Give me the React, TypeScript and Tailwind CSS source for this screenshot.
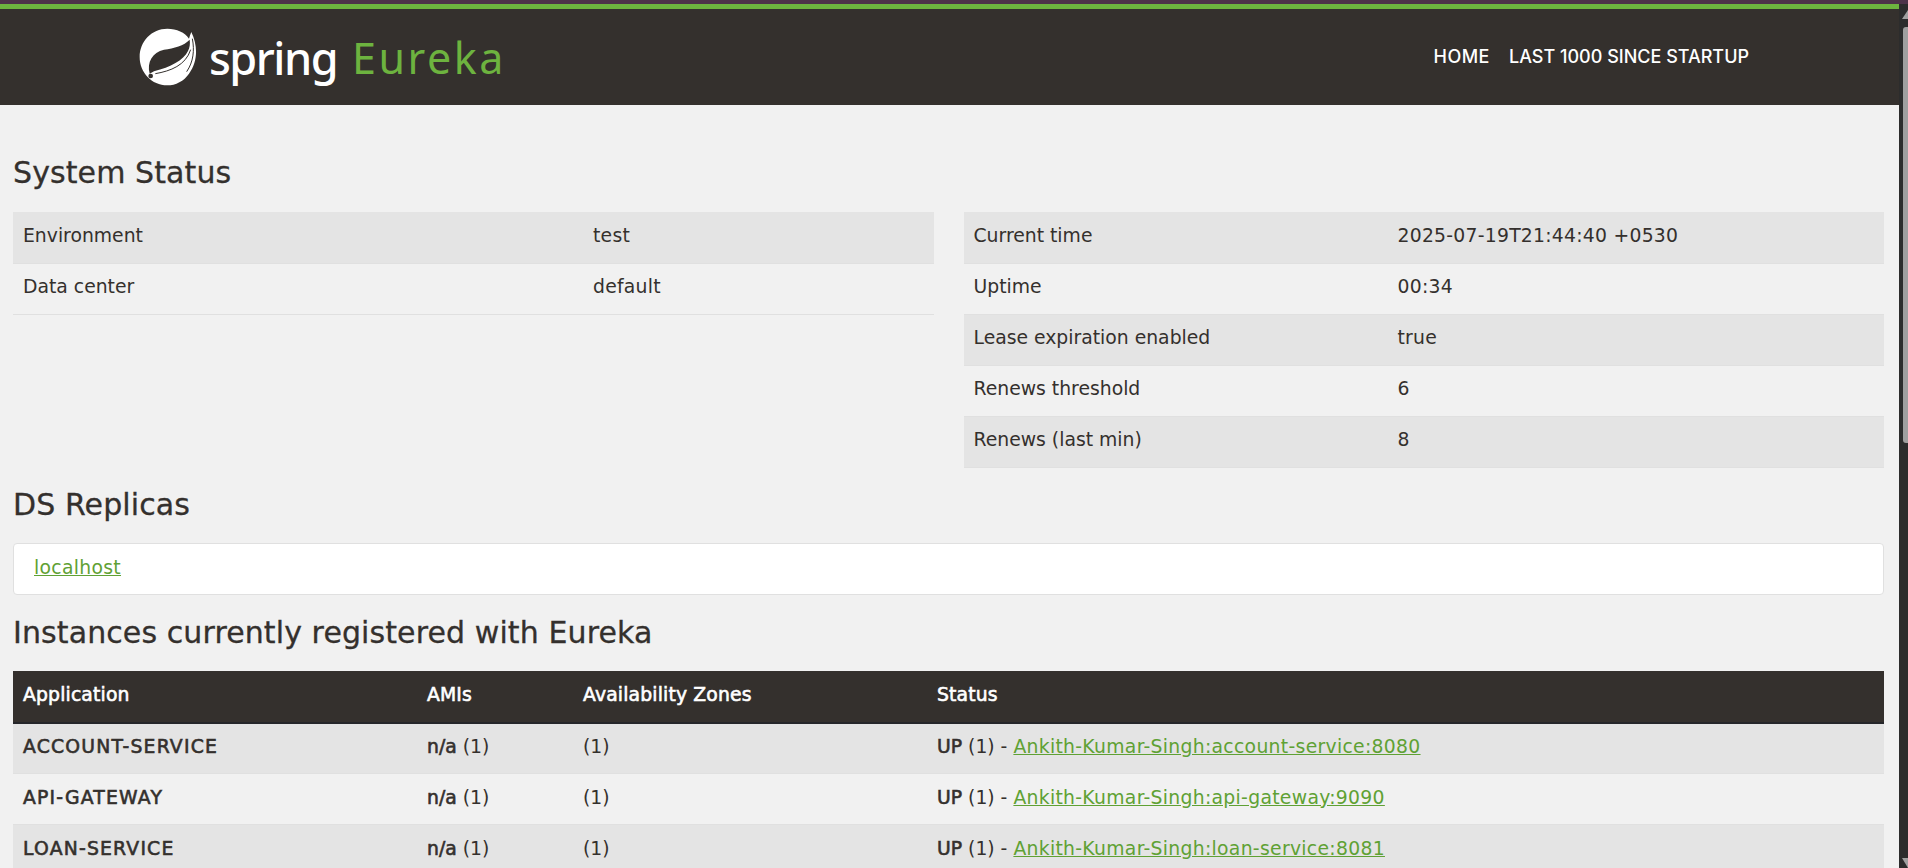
const LeafLogo = () => (
  <svg width="58" height="60" viewBox="55 50 174 180" className="shrink-0">
    <path
      fill="#fff"
      d="M140 55C168 55 193 66 205 85C207 78 209 72 212 65C231 105 233 150 205 190C190 212 165 225 140 225C93 225 57 187 57 140C57 93 93 55 140 55Z"
    />
    <path
      fill="#34302d"
      d="M87 190C78 155 95 126 130 118C160 114 190 106 207 88C209 100 207 112 202 122C188 150 150 170 100 183Z"
    />
    <path fill="none" stroke="#34302d" strokeWidth="3" d="M104 190C150 182 195 165 210 118" />
    <path fill="none" stroke="#34302d" strokeWidth="3" d="M215 85C222 120 218 155 198 184" />
    <circle cx="90" cy="197" r="7" fill="#34302d" />
  </svg>
);

const leftStatus = [
  ["Environment", "test"],
  ["Data center", "default"],
];

const rightStatus = [
  ["Current time", "2025-07-19T21:44:40 +0530"],
  ["Uptime", "00:34"],
  ["Lease expiration enabled", "true"],
  ["Renews threshold", "6"],
  ["Renews (last min)", "8"],
];

const instances = [
  ["ACCOUNT-SERVICE", "Ankith-Kumar-Singh:account-service:8080"],
  ["API-GATEWAY", "Ankith-Kumar-Singh:api-gateway:9090"],
  ["LOAN-SERVICE", "Ankith-Kumar-Singh:loan-service:8081"],
];

const StatusTable = ({ rows, keyWidth }: { rows: string[][]; keyWidth: string }) => (
  <table className="w-full table-fixed border-collapse">
    <tbody>
      {rows.map((row, index) => (
        <tr key={row[0]} className={index % 2 === 0 ? "bg-[#e4e4e4]" : ""}>
          <td className={`h-[51px] border-b border-[#e0e0e0] px-[10px] pb-[2px] ${keyWidth}`}>{row[0]}</td>
          <td className="h-[51px] border-b border-[#e0e0e0] px-[10px] pb-[2px] tracking-[0.25px]">{row[1]}</td>
        </tr>
      ))}
    </tbody>
  </table>
);

const Heading = ({ children, className }: { children: string; className: string }) => (
  <h2 className={`text-[30px] leading-[32px] tracking-[0.1px] text-[#34302d] [-webkit-text-stroke:0.3px_currentColor] ${className}`}>{children}</h2>
);

const fakeBold = "[-webkit-text-stroke:0.6px_currentColor]";

export default function App() {
  return (
    <div className="h-[868px] overflow-hidden bg-[#f1f1f1] font-['DejaVu_Sans',sans-serif] text-[18.8px] text-[#34302d]">
      <div className="h-1 bg-[#4d3349]" />
      <div className="flex h-[864px]">
        <div className="min-w-0 flex-1">
          {/* Navbar */}
          <header className="flex h-[101px] items-center justify-between border-t-[5px] border-[#6db33f] bg-[#34302d]">
            <div className="ml-[139px] flex items-center">
              <LeafLogo />
              <span className="ml-3 font-['Noto_Sans',sans-serif] text-[45px] leading-none font-medium tracking-[-1.5px] text-white">
                spring
              </span>
              <span className="ml-[15px] font-['Noto_Sans',sans-serif] text-[43px] leading-none tracking-[2.5px] text-[#6db33f]">
                Eureka
              </span>
            </div>
            <nav className="mr-[150px] flex gap-[19px] pb-[2px] font-['Inter',sans-serif] text-[18px] font-medium text-white">
              <span className="tracking-[0.5px]">HOME</span>
              <span>LAST 1000 SINCE STARTUP</span>
            </nav>
          </header>

          <main className="pr-[15px] pl-[13px]">
            <Heading className="mt-[52px]">System Status</Heading>
            <div className="mt-[23px] flex items-start gap-[30px]">
              <div className="flex-1">
                <StatusTable rows={leftStatus} keyWidth="w-[570px]" />
              </div>
              <div className="flex-1">
                <StatusTable rows={rightStatus} keyWidth="w-[424px]" />
              </div>
            </div>

            <Heading className="mt-[21px]">DS Replicas</Heading>
            <div className="mt-[22px] flex h-[52px] items-center rounded-[4px] border border-[#e0e0e0] bg-white px-5">
              <a className="tracking-[0.3px] text-[#5fa134] underline">localhost</a>
            </div>

            <Heading className="mt-[22px]">Instances currently registered with Eureka</Heading>
            <table className="mt-[22px] w-full table-fixed border-collapse">
              <thead>
                <tr className="bg-[#34302d] text-left text-white">
                  <th className={`h-[52px] w-[404px] border-b-2 border-[#25262a] px-[10px] pb-[2px] font-normal tracking-[0.15px] ${fakeBold}`}>Application</th>
                  <th className={`h-[52px] w-[156px] border-b-2 border-[#25262a] px-[10px] pb-[2px] font-normal tracking-[0.15px] ${fakeBold}`}>AMIs</th>
                  <th className={`h-[52px] w-[354px] border-b-2 border-[#25262a] px-[10px] pb-[2px] font-normal tracking-[0.15px] ${fakeBold}`}>Availability Zones</th>
                  <th className={`h-[52px] border-b-2 border-[#25262a] px-[10px] pb-[2px] font-normal tracking-[0.15px] ${fakeBold}`}>Status</th>
                </tr>
              </thead>
              <tbody>
                {instances.map((instance, index) => (
                  <tr key={instance[0]} className={index % 2 === 0 ? "bg-[#e4e4e4]" : ""}>
                    <td className={`h-[51px] border-b border-[#e0e0e0] px-[10px] pb-[2px] tracking-[1.2px] ${fakeBold}`}>{instance[0]}</td>
                    <td className="h-[51px] border-b border-[#e0e0e0] px-[10px] pb-[2px]">
                      <span className={fakeBold}>n/a</span> (1)
                    </td>
                    <td className="h-[51px] border-b border-[#e0e0e0] px-[10px] pb-[2px]">(1)</td>
                    <td className="h-[51px] border-b border-[#e0e0e0] px-[10px] pb-[2px]">
                      <span className={fakeBold}>UP</span> (1) - <a className="tracking-[0.3px] text-[#5fa134] underline">{instance[1]}</a>
                    </td>
                  </tr>
                ))}
              </tbody>
            </table>
          </main>
        </div>

        {/* Scrollbar, cut off by the right edge of the screenshot */}
        <div className="flex w-[9px] shrink-0 flex-col items-end bg-[#2c2c2c]">
          <div className="mt-[6px] h-[9px] w-[6px] bg-[#a0a0a0] [clip-path:polygon(100%_0,100%_100%,0_100%)]" />
          <div className="mt-[8px] h-[416px] w-[5px] rounded-tl-[3px] rounded-bl-[3px] bg-[#9f9f9f]" />
          <div className="mt-auto h-[10px] w-[6px] bg-[#a0a0a0] [clip-path:polygon(0_0,100%_0,100%_100%)]" />
        </div>
      </div>
    </div>
  );
}
